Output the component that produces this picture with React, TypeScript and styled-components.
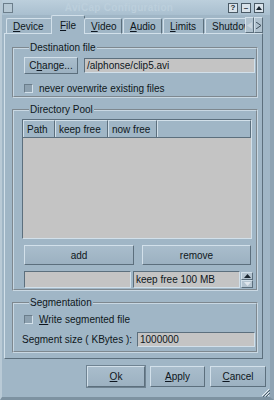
import styled, { createGlobalStyle } from "styled-components";

const BG = "#a0b6c6";
const LIGHT = "#d2e0ea";
const DARK = "#5c6f7d";
const FIELD = "#c4c4c4";
const INK = "#0e1620";

const GlobalStyle = createGlobalStyle`
  html, body {
    margin: 0;
    padding: 0;
    background: ${BG};
  }
  body {
    font-family: "Liberation Sans", Arial, sans-serif;
    font-size: 10px;
    color: ${INK};
  }
`;

const Window = styled.div`
  position: relative;
  width: 274px;
  height: 400px;
  box-sizing: border-box;
  display: flex;
  flex-direction: column;
  background: ${BG};
  border-left: 2px solid #b9cad6;
  border-right: 4px solid #8fa4b4;
  border-bottom: 3px solid #7d92a1;
  overflow: hidden;
`;

const TitleBar = styled.div`
  height: 15px;
  flex: none;
  display: flex;
  align-items: center;
  padding: 0 6px 0 1px;
  background: linear-gradient(#bccfdc, #a9bfcf);
`;

const TitleText = styled.div`
  flex: 1;
  text-align: center;
  font-size: 10px;
  font-weight: bold;
  color: #bccfdc;
  letter-spacing: 0.3px;
`;

const TitleButton = styled.div`
  width: 8px;
  height: 8px;
  margin-left: 3px;
  border: 1px solid #4a5a66;
  background: #d8e2ea;
  display: flex;
  align-items: center;
  justify-content: center;
  font-size: 8px;
  font-weight: bold;
  line-height: 8px;
  color: #1a2630;
`;

const MenuBox = styled.div`
  width: 8px;
  height: 8px;
  border: 1px solid #6c7e8b;
  background: #b6c8d4;
`;

const Body = styled.div`
  flex: 1;
  display: flex;
  flex-direction: column;
  padding: 0 0 0 2px;
`;

const TabRow = styled.div`
  height: 19px;
  display: flex;
  align-items: flex-end;
  padding-left: 2px;
  margin-bottom: -1px;
  position: relative;
  z-index: 1;
`;

const TabStrip = styled.div`
  width: 239px;
  display: flex;
  align-items: flex-end;
  overflow: hidden;
`;

const Tab = styled.div<{ $active?: boolean; $w: number }>`
  flex: none;
  width: ${(p) => p.$w}px;
  height: ${(p) => (p.$active ? 19 : 16)}px;
  box-sizing: border-box;
  margin: ${(p) => (p.$active ? "0 -1px 0 -2px" : "0 1px 0 0")};
  padding-left: ${(p) => (p.$active ? 8 : 6)}px;
  display: flex;
  align-items: center;
  font-size: 10px;
  background: ${BG};
  border-top: 1px solid ${LIGHT};
  border-left: 1px solid ${LIGHT};
  border-right: 1px solid ${DARK};
  border-bottom: ${(p) => (p.$active ? "none" : `1px solid ${LIGHT}`)};
  border-radius: 2px 2px 0 0;
  white-space: nowrap;
  overflow: hidden;
`;

const U = styled.span`
  text-decoration: underline;
  text-underline-offset: 1px;
`;

const ScrollArrows = styled.div`
  display: flex;
  height: 16px;
  align-self: flex-end;
  margin-bottom: 1px;
`;

const ArrowButton = styled.div`
  width: 9px;
  height: 16px;
  box-sizing: border-box;
  border-top: 1px solid ${LIGHT};
  border-left: 1px solid ${LIGHT};
  border-right: 1px solid ${DARK};
  border-bottom: 1px solid ${DARK};
  background: #b0c2cf;
  display: flex;
  align-items: center;
  justify-content: center;
`;

const Panel = styled.div`
  width: 259px;
  height: 326px;
  box-sizing: border-box;
  border-top: 1px solid ${LIGHT};
  border-left: 1px solid ${LIGHT};
  border-right: 1px solid ${DARK};
  border-bottom: 1px solid ${DARK};
  padding: 8px 4px 0 7px;
  display: flex;
  flex-direction: column;
`;

const Group = styled.fieldset<{ $h: number }>`
  margin: 0;
  height: ${(p) => p.$h}px;
  box-sizing: border-box;
  min-width: 0;
  padding: 3px 4px 0 10px;
  border: 2px groove #c9d8e3;
  display: flex;
  flex-direction: column;
  & + & {
    margin-top: 6px;
  }
`;

const Legend = styled.legend`
  padding: 0 1px;
  margin-left: 5px;
  font-size: 10px;
  line-height: 12px;
`;

const Row = styled.div<{ $gap?: number; $mt?: number }>`
  display: flex;
  align-items: center;
  gap: ${(p) => p.$gap ?? 0}px;
  margin-top: ${(p) => p.$mt ?? 0}px;
`;

const Button = styled.div<{ $w: number; $h?: number; $default?: boolean }>`
  width: ${(p) => p.$w}px;
  height: ${(p) => p.$h ?? 17}px;
  flex: none;
  box-sizing: border-box;
  display: flex;
  align-items: center;
  justify-content: center;
  font-size: 10px;
  background: linear-gradient(#a9bdcc, #9cb1c1);
  border-top: 1px solid ${LIGHT};
  border-left: 1px solid ${LIGHT};
  border-right: 1px solid ${DARK};
  border-bottom: 1px solid ${DARK};
  box-shadow: ${(p) => (p.$default ? `0 0 0 1px #6f8392` : "none")};
`;

const Field = styled.div<{ $w: number; $h?: number }>`
  width: ${(p) => p.$w}px;
  height: ${(p) => p.$h ?? 15}px;
  flex: none;
  box-sizing: border-box;
  background: ${FIELD};
  border-top: 1px solid ${DARK};
  border-left: 1px solid ${DARK};
  border-right: 1px solid ${LIGHT};
  border-bottom: 1px solid ${LIGHT};
  padding-left: 2px;
  display: flex;
  align-items: center;
  font-size: 10px;
  white-space: nowrap;
  overflow: hidden;
`;

const Check = styled.div`
  width: 9px;
  height: 9px;
  flex: none;
  box-sizing: border-box;
  background: #8da1b0;
  border-top: 1px solid #6a7d8b;
  border-left: 1px solid #6a7d8b;
  border-right: 1px solid ${LIGHT};
  border-bottom: 1px solid ${LIGHT};
`;

const Label = styled.span<{ $w?: number }>`
  font-size: 10px;
  white-space: nowrap;
  ${(p) => (p.$w ? `width: ${p.$w}px; flex: none;` : "")}
`;

const Table = styled.div`
  width: 234px;
  height: 120px;
  box-sizing: border-box;
  background: ${FIELD};
  border-top: 1px solid ${DARK};
  border-left: 1px solid ${DARK};
  border-right: 1px solid ${LIGHT};
  border-bottom: 1px solid ${LIGHT};
  display: flex;
  flex-direction: column;
`;

const HeaderRow = styled.div`
  height: 17px;
  display: flex;
  background: ${BG};
  border-bottom: 1px solid ${DARK};
`;

const HeaderCell = styled.div<{ $w?: number }>`
  ${(p) => (p.$w ? `width: ${p.$w}px; flex: none;` : "flex: 1;")}
  box-sizing: border-box;
  padding-left: 3px;
  display: flex;
  align-items: center;
  font-size: 10px;
  border-left: 1px solid ${LIGHT};
  border-top: 1px solid ${LIGHT};
  border-right: 1px solid ${DARK};
`;

const Spinner = styled.div`
  width: 12px;
  height: 16px;
  flex: none;
  display: flex;
  flex-direction: column;
  margin-left: 1px;
`;

const SpinHalf = styled.div`
  flex: 1;
  display: flex;
  align-items: center;
  justify-content: center;
  background: #b4c4d0;
  border-top: 1px solid ${LIGHT};
  border-left: 1px solid ${LIGHT};
  border-right: 1px solid ${DARK};
  border-bottom: 1px solid ${DARK};
`;

const Footer = styled.div`
  display: flex;
  justify-content: flex-end;
  gap: 5px;
  padding: 7px 4px 0 0;
`;

const Grip = styled.svg`
  position: absolute;
  right: 0;
  bottom: 0;
`;

const tabs: { key: string; rest: string; w: number; active?: boolean }[] = [
  { key: "D", rest: "evice", w: 46 },
  { key: "F", rest: "ile", w: 34, active: true },
  { key: "V", rest: "ideo", w: 38 },
  { key: "A", rest: "udio", w: 39 },
  { key: "L", rest: "imits", w: 41 },
  { key: "", rest: "Shutdown", w: 48 },
];

export default function App() {
  return (
    <>
      <GlobalStyle />
      <Window>
        <TitleBar>
          <MenuBox />
          <TitleText>AviCap Configuration</TitleText>
          <TitleButton>?</TitleButton>
          <TitleButton>–</TitleButton>
          <TitleButton>
            <svg width="6" height="5" viewBox="0 0 6 5">
              <path d="M0 5 L3 1 L6 5 Z" fill="#1a2630" />
            </svg>
          </TitleButton>
        </TitleBar>
        <Body>
          <TabRow>
            <TabStrip>
              {tabs.map((t) => (
                <Tab key={t.rest} $w={t.w} $active={t.active}>
                  {t.key && <U>{t.key}</U>}
                  {t.rest}
                </Tab>
              ))}
            </TabStrip>
            <ScrollArrows>
              <ArrowButton>
                <svg width="5" height="7" viewBox="0 0 5 7">
                  <path d="M5 0 L0 3.5 L5 7 Z" fill="#c9d5de" />
                </svg>
              </ArrowButton>
              <ArrowButton>
                <svg width="5" height="7" viewBox="0 0 5 7">
                  <path d="M0 0 L5 3.5 L0 7" fill="none" stroke="#3f4f5b" />
                </svg>
              </ArrowButton>
            </ScrollArrows>
          </TabRow>
          <Panel>
            <Group $h={56}>
              <Legend>Destination file</Legend>
              <Row $gap={6}>
                <Button $w={54}>
                  C<U>h</U>ange...
                </Button>
                <Field $w={171}>/alphonse/clip5.avi</Field>
              </Row>
              <Row $gap={6} $mt={9}>
                <Check />
                <Label>never overwrite existing files</Label>
              </Row>
            </Group>
            <Group $h={187}>
              <Legend>Directory Pool</Legend>
              <Row style={{ marginLeft: -2 }}>
                <Table>
                  <HeaderRow>
                    <HeaderCell $w={32}>Path</HeaderCell>
                    <HeaderCell $w={53}>keep free</HeaderCell>
                    <HeaderCell $w={49}>now free</HeaderCell>
                    <HeaderCell />
                  </HeaderRow>
                </Table>
              </Row>
              <Row $gap={8} $mt={6}>
                <Button $w={110} $h={20}>
                  add
                </Button>
                <Button $w={109} $h={20}>
                  remove
                </Button>
              </Row>
              <Row $mt={6}>
                <Field $w={107} $h={17} />
                <Field $w={107} $h={17} style={{ marginLeft: 2 }}>
                  keep free 100 MB
                </Field>
                <Spinner>
                  <SpinHalf>
                    <svg width="7" height="4" viewBox="0 0 7 4">
                      <path d="M0 4 L3.5 0 L7 4 Z" fill="#1a2630" />
                    </svg>
                  </SpinHalf>
                  <SpinHalf>
                    <svg width="7" height="4" viewBox="0 0 7 4">
                      <path d="M0 0 L3.5 4 L7 0 Z" fill="#dfe6ec" />
                    </svg>
                  </SpinHalf>
                </Spinner>
              </Row>
            </Group>
            <Group $h={56}>
              <Legend>Segmentation</Legend>
              <Row $gap={6} $mt={2}>
                <Check />
                <Label>
                  <U>W</U>rite segmented file
                </Label>
              </Row>
              <Row $mt={7} style={{ marginLeft: -2 }}>
                <Label $w={115}>Segment size ( KBytes ):</Label>
                <Field $w={118}>1000000</Field>
              </Row>
            </Group>
          </Panel>
          <Footer>
            <Button $w={58} $h={21} $default>
              <U>O</U>k
            </Button>
            <Button $w={55} $h={21}>
              <U>A</U>pply
            </Button>
            <Button $w={56} $h={21}>
              <U>C</U>ancel
            </Button>
          </Footer>
        </Body>
        <Grip width="10" height="10" viewBox="0 0 10 10">
          <path d="M9 2 L2 9 M9 5 L5 9 M9 8 L8 9" stroke="#e8eef2" strokeWidth="1" />
          <path d="M10 3 L3 10 M10 6 L6 10" stroke="#4d5e6a" strokeWidth="1" />
        </Grip>
      </Window>
    </>
  );
}
